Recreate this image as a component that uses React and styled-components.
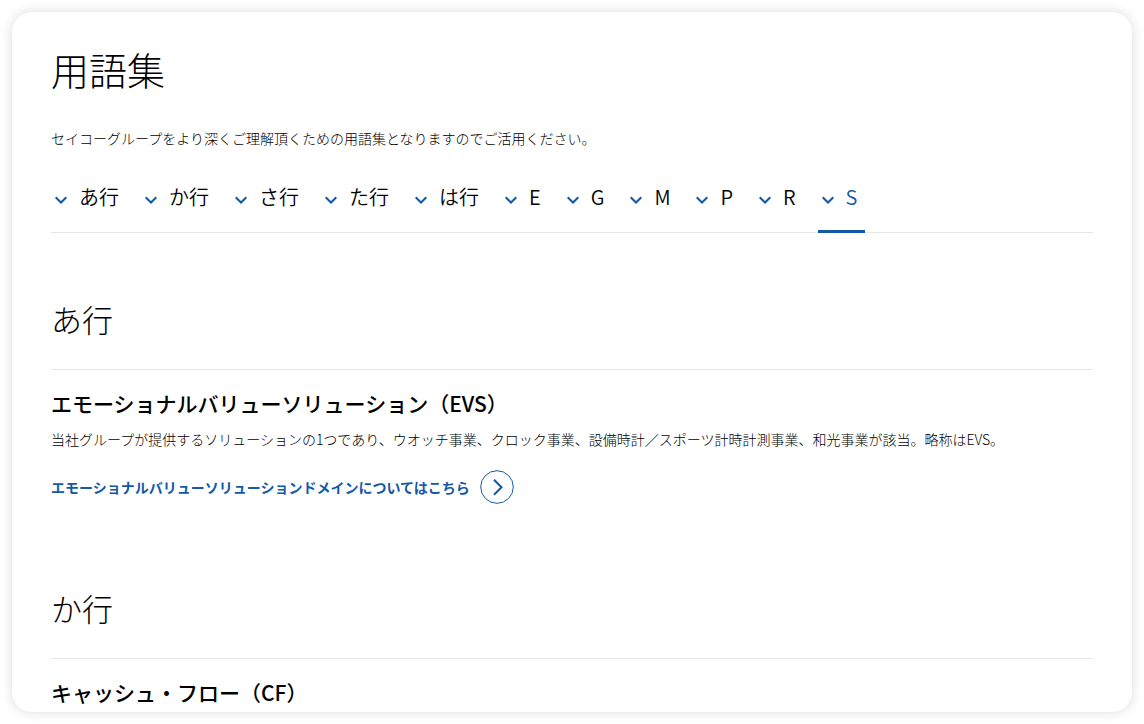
import React from "react";
import styled, { createGlobalStyle } from "styled-components";

const GlobalStyle = createGlobalStyle`
  * {
    box-sizing: border-box;
  }

  body {
    margin: 0;
    background: #fff;
    color: #000;
    font-family: "Noto Sans CJK JP", sans-serif;
    font-weight: 300;
  }
`;

const Card = styled.main`
  height: calc(100vh - 24px);
  margin: 12px;
  padding: 29px 39px 0;
  overflow: hidden;
  border-radius: 20px;
  background: #fff;
  box-shadow: 0 0 12px rgba(0, 0, 0, 0.15);
`;

const Title = styled.h1`
  margin: 0;
  font-size: 38px;
  font-weight: 300;
  line-height: 56px;
`;

const Text = styled.p`
  margin: 0;
  font-size: 14px;
  line-height: 24px;
`;

const Lead = styled(Text)`
  margin-top: 29px;
`;

const Nav = styled.nav`
  display: flex;
  gap: 14px;
  margin-top: 28px;
  border-bottom: 1px solid #e6e6e6;
`;

const NavLink = styled.a`
  display: flex;
  align-items: center;
  gap: 12px;
  height: 55px;
  margin-bottom: -1px;
  padding: 0 8px 14px 4px;
  border-bottom: 3px solid ${(props) => (props.$active ? "#1459a8" : "transparent")};
  color: ${(props) => (props.$active ? "#1459a8" : "#000")};
  font-size: 20px;
  font-weight: 350;
  line-height: 30px;
  text-decoration: none;

  svg {
    margin-top: 6px;
  }
`;

const Section = styled.section`
  margin-top: 62px;
  padding-bottom: 18px;
`;

const SectionTitle = styled.h2`
  margin: 0;
  padding-bottom: 26px;
  border-bottom: 1px solid #e6e6e6;
  font-size: 31px;
  font-weight: 300;
  line-height: 48px;
`;

const Term = styled.h3`
  margin: 17px 0 8px;
  font-size: 21px;
  font-weight: 500;
  line-height: 32px;
`;

const MoreLink = styled.a`
  display: inline-flex;
  align-items: center;
  gap: 10px;
  margin-top: 19px;
  color: #1459a8;
  font-size: 14px;
  font-weight: 700;
  text-decoration: none;
`;

const rows = ["あ行", "か行", "さ行", "た行", "は行", "E", "G", "M", "P", "R", "S"];

const sections = [
  {
    id: "あ行",
    term: "エモーショナルバリューソリューション（EVS）",
    text: "当社グループが提供するソリューションの1つであり、ウオッチ事業、クロック事業、設備時計／スポーツ計時計測事業、和光事業が該当。略称はEVS。",
    link: "エモーショナルバリューソリューションドメインについてはこちら",
  },
  { id: "か行", term: "キャッシュ・フロー（CF）" },
];

function ChevronDown() {
  return (
    <svg width="12" height="8" viewBox="0 0 12 8" fill="none" stroke="#1459a8" strokeWidth="2" aria-hidden="true">
      <path d="M.7 1.2L6 6.5l5.300-5.300" />
    </svg>
  );
}

function CircleArrow() {
  return (
    <svg width="34" height="34" viewBox="0 0 34 34" fill="none" stroke="#1459a8" aria-hidden="true">
      <circle cx="17" cy="17" r="16.3" />
      <path d="M14 9.800l7.500 7.500-7.500 7.500" strokeWidth="2" />
    </svg>
  );
}

export default function App() {
  return (
    <>
      <GlobalStyle />
      <Card>
        <Title>用語集</Title>
        <Lead>セイコーグループをより深くご理解頂くための用語集となりますのでご活用ください。</Lead>
        <Nav>
          {rows.map((row) => (
            <NavLink key={row} href={`#${row}`} $active={row === "S"}>
              <ChevronDown />
              {row}
            </NavLink>
          ))}
        </Nav>
        {sections.map((section) => (
          <Section key={section.id} id={section.id}>
            <SectionTitle>{section.id}</SectionTitle>
            <Term>{section.term}</Term>
            {section.text && <Text>{section.text}</Text>}
            {section.link && (
              <MoreLink href="#evs">
                {section.link}
                <CircleArrow />
              </MoreLink>
            )}
          </Section>
        ))}
      </Card>
    </>
  );
}
